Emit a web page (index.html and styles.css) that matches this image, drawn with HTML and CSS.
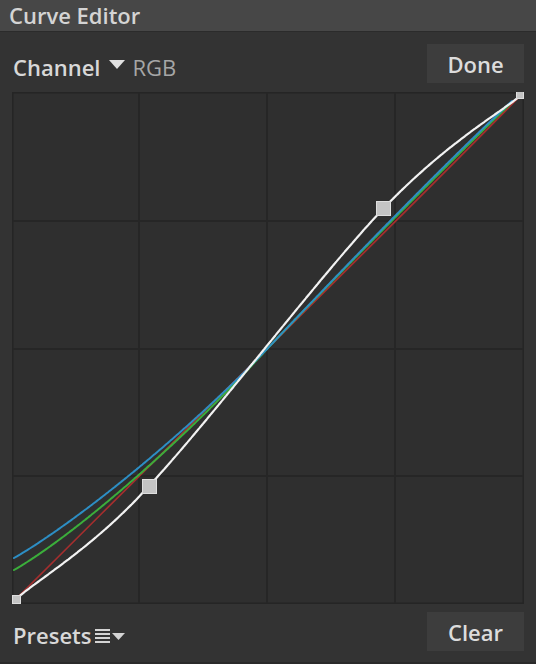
FILE: index.html
```html
<!DOCTYPE html>
<html lang="en">
<head>
  <meta charset="UTF-8" />
  <title>Curve Editor</title>
  <link rel="stylesheet" href="styles.css">
</head>
<body>
  <div class="panel">
    <div class="title-bar">Curve Editor</div>

    <div class="toolbar">
      <div class="channel">
        <span class="label">Channel</span>
        <svg class="caret" width="18" height="11" viewBox="0 0 18 11"><path d="M1 1 H17 L9 10 Z" fill="#e2e2e2"/></svg>
        <span class="value">RGB</span>
      </div>
      <button class="btn">Done</button>
    </div>

    <!-- curve graph, drawn in page coordinates -->
    <svg class="graph" width="512" height="512" viewBox="12 92 512 512">
      <rect x="12.5" y="92.5" width="511" height="511" fill="#2f2f2f" stroke="#252525" stroke-width="2"/>
      <g stroke="#262626" stroke-width="2">
        <line x1="139" y1="93" x2="139" y2="603"/>
        <line x1="267" y1="93" x2="267" y2="603"/>
        <line x1="395" y1="93" x2="395" y2="603"/>
        <line x1="13" y1="221" x2="523" y2="221"/>
        <line x1="13" y1="349" x2="523" y2="349"/>
        <line x1="13" y1="476" x2="523" y2="476"/>
      </g>
      <g fill="none" stroke-linecap="round">
        <path d="M16 599 C 100 515 200 416 267 349 C 340 276 440 178 520 96" stroke="#a52e2e" stroke-width="1.7"/>
        <path d="M14 570 C 70 538 180 445 267 349 C 340 272 440 172 510 104" stroke="#3bae3b" stroke-width="2" stroke-dasharray="3 1"/>
        <path d="M14 558 C 70 526 180 440 267 349 C 340 272 440 168 512 101" stroke="#2d8ec4" stroke-width="2" stroke-dasharray="3 1"/>
        <path d="M16 599 C 40 578 95 546 148 487 C 209 422 321 274 383 209 C 445 144 497 115 520 96" stroke="#f2f2f2" stroke-width="2.2" stroke-dasharray="5 1"/>
      </g>
      <g fill="#c4c4c4" stroke="#dedede" stroke-width="1">
        <rect x="12.5" y="595.5" width="8" height="8"/>
        <rect x="516.5" y="91.5" width="7" height="7"/>
        <rect x="142.5" y="479.5" width="14" height="14"/>
        <rect x="376.5" y="201.5" width="14" height="14"/>
      </g>
    </svg>

    <div class="toolbar bottom">
      <div class="channel">
        <span class="label">Presets</span>
        <svg class="menu-icon" width="31" height="16" viewBox="0 0 31 16">
          <g fill="#d4d4d4">
            <rect x="0" y="1" width="15" height="2"/>
            <rect x="0" y="5" width="15" height="2"/>
            <rect x="0" y="9" width="15" height="2"/>
            <rect x="0" y="13" width="15" height="2"/>
            <path d="M17 5 H30 L23.5 12 Z"/>
          </g>
        </svg>
      </div>
      <button class="btn">Clear</button>
    </div>
  </div>
</body>
</html>
```

FILE: styles.css
```css
* { box-sizing: border-box; margin: 0; padding: 0; }

body {
  background: #333333;
  font-family: 'Open Sans', 'Noto Sans', sans-serif;
  color: #d6d6d6;
  width: 536px;
  height: 664px;
  overflow: hidden;
}

.panel {
  width: 536px;
  height: 664px;
  display: flex;
  flex-direction: column;
  background: #333333;
  border-bottom: 2px solid #2a2a2a;
}

.title-bar {
  height: 32px;
  background: #474747;
  border-bottom: 1px solid #2b2b2b;
  padding-left: 9px;
  font-size: 22px;
  font-weight: 600;
  line-height: 30px;
  color: #d4d4d4;
}

.toolbar {
  height: 60px;
  display: flex;
  align-items: center;
  justify-content: space-between;
  padding: 3px 12px 0 13px;
}

.toolbar.bottom {
  height: 58px;
  padding: 0 12px 3px 13px;
}

.channel {
  display: flex;
  align-items: center;
  font-size: 22px;
  font-weight: 600;
  padding-top: 6px;
}

.channel .label { color: #d8d8d8; }

.caret {
  margin: 0 6px 0 8px;
  position: relative;
  top: -2px;
}

.channel .value { color: #a6a6a6; font-weight: 500; }

.menu-icon {
  margin-left: 3px;
  position: relative;
  top: 1px;
}

.btn {
  width: 97px;
  height: 39px;
  background: #3d3d3d;
  border: none;
  color: #dcdcdc;
  font-family: inherit;
  font-size: 22px;
  font-weight: 600;
  cursor: pointer;
}

.btn:hover { background: #454545; }

.graph {
  display: block;
  margin-left: 12px;
}
```
